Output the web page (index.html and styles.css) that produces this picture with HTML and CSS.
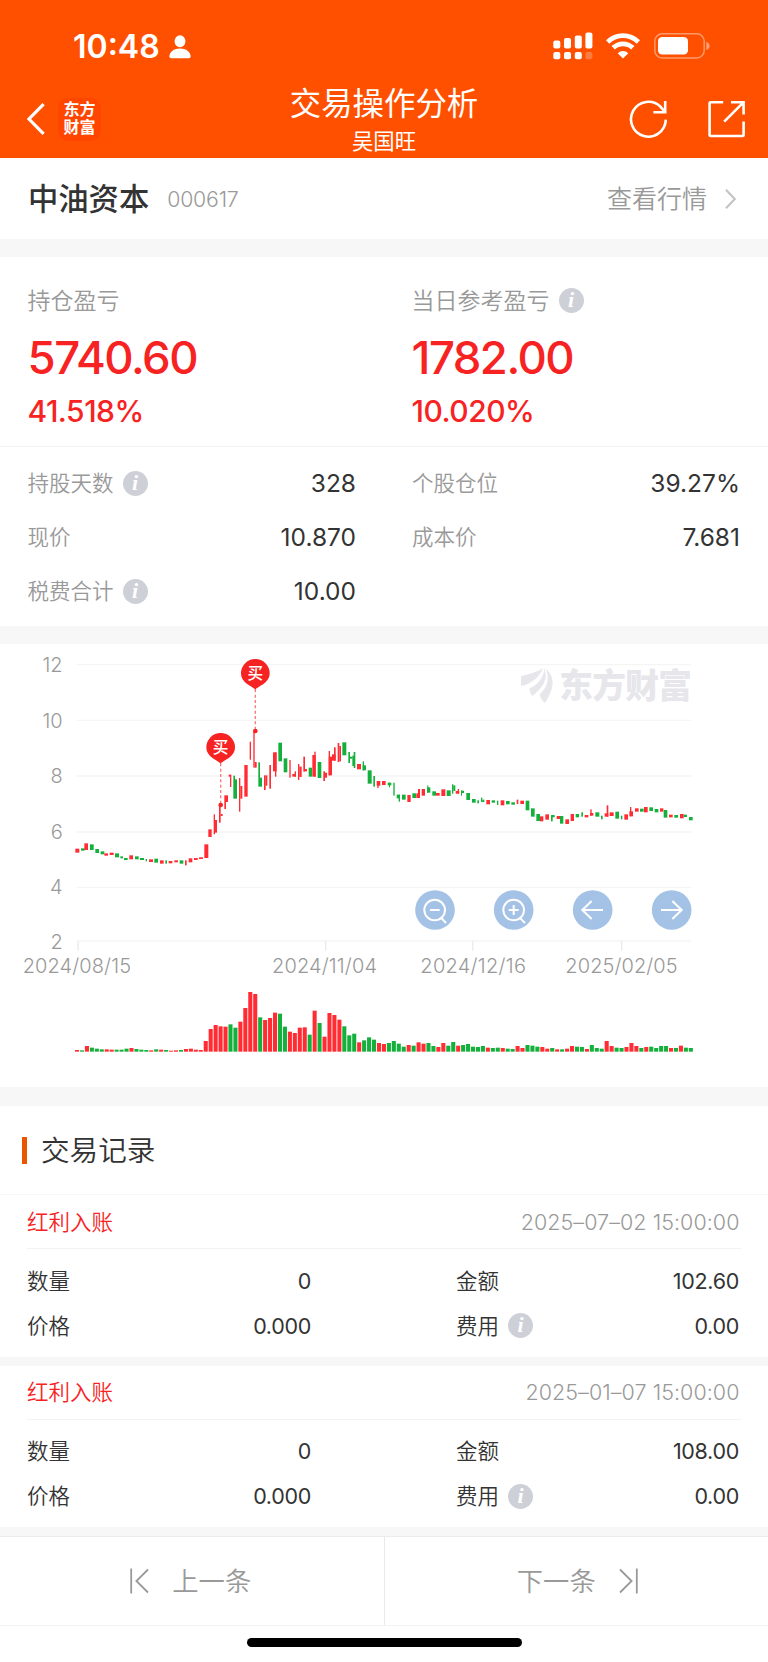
FILE: index.html
```html
<!DOCTYPE html>
<html lang="zh-CN">
<head>
  <meta charset="UTF-8">
  <title>交易操作分析</title>
  <meta name="viewport" content="width=device-width,initial-scale=1">
  <link rel="stylesheet" href="styles.css">
</head>
<body>

<header class="header">
  <!-- phone status bar -->
  <div class="status-bar">
    <div class="status-left">
      <span class="time">10:48</span>
      <svg width="22" height="24" viewBox="0 0 22 24" fill="#fff">
        <ellipse cx="11" cy="6.2" rx="5.4" ry="6"/>
        <path d="M0.4 21.5C0.4 17 5 13.6 11 13.6S21.6 17 21.6 21.5Q21.6 23.3 20 23.3H2Q0.4 23.3 0.4 21.5Z"/>
      </svg>
    </div>
    <div class="status-right">
      <svg width="40" height="28" viewBox="0 0 40 28" fill="#fff">
        <rect x="0.3" y="8.4" width="7" height="8" rx="2"/>
        <rect x="11" y="6" width="7" height="10.4" rx="2"/>
        <rect x="21.8" y="3.4" width="7" height="13" rx="2"/>
        <rect x="32.4" y="0.4" width="7" height="16" rx="2"/>
        <rect x="0.3" y="20" width="7" height="7.3" rx="2"/>
        <rect x="11" y="20" width="7" height="7.3" rx="2"/>
        <rect x="21.8" y="20" width="7" height="7.3" rx="2"/>
        <rect x="32.4" y="20" width="7" height="7.3" rx="2" opacity="0.25"/>
      </svg>
      <svg class="wifi" width="34" height="26" viewBox="0 0 34 26" fill="none" stroke="#fff" stroke-width="4.8">
        <path d="M1.6 9A22 22 0 0 1 32.4 9"/>
        <path d="M7.2 14.8A14 14 0 0 1 26.8 14.8"/>
        <path d="M17 25.4L11.7 20.2A7.6 7.6 0 0 1 22.3 20.2Z" fill="#fff" stroke="none"/>
      </svg>
      <svg width="56" height="26" viewBox="0 0 56 26">
        <rect x="0.8" y="0.8" width="49.4" height="24.2" rx="7.4" fill="none" stroke="#fff" stroke-opacity="0.42" stroke-width="1.5"/>
        <rect x="4" y="4" width="30" height="17.6" rx="4.2" fill="#fff"/>
        <path d="M52.3 8.8C54.3 9.6 55.6 11 55.6 12.9S54.3 16.2 52.3 17Z" fill="#fff" fill-opacity="0.45"/>
      </svg>
    </div>
  </div>

  <div class="nav-bar">
    <div class="nav-left">
      <svg width="18" height="32" viewBox="0 0 18 32" fill="none" stroke="#fff" stroke-width="3.2">
        <path d="M16.6 1.2L2 16L16.6 30.8"/>
      </svg>
      <div class="logo">东方<br>财富</div>
    </div>
    <div class="nav-title">
      <h1>交易操作分析</h1>
      <p>吴国旺</p>
    </div>
    <div class="nav-right">
      <svg width="38" height="38" viewBox="0 0 38 38" fill="none" stroke="#fff" stroke-width="2.6">
        <path d="M36.8 19.6A17.4 17.4 0 1 1 31.6 6.8L35.8 11.6"/>
        <path d="M36.2 1V12.2H24.4"/>
      </svg>
      <svg width="38" height="38" viewBox="0 0 38 38" fill="none" stroke="#fff" stroke-width="2.6">
        <path d="M16.2 2.2H3.8Q2.6 2.2 2.6 3.4V34.8Q2.6 36 3.8 36H35.4Q36.6 36 36.6 34.8V21.4"/>
        <path d="M24 2.2H36.6V14.6M36.2 2.6L17.2 21.6"/>
      </svg>
    </div>
  </div>
</header>

<section class="stock">
  <h2>中油资本</h2>
  <span class="code">000617</span>
  <a class="quote"><span>查看行情</span>
    <svg width="11" height="20" viewBox="0 0 11 20" fill="none" stroke="#c4c4c8" stroke-width="2.2">
      <path d="M1 0.8L9.8 10L1 19.2"/>
    </svg>
  </a>
</section>

<section class="summary">
  <div class="summary-item">
    <p class="label"><span>持仓盈亏</span></p>
    <p class="amount">5740.60</p>
    <p class="percent">41.518%</p>
  </div>
  <div class="summary-item">
    <p class="label"><span>当日参考盈亏</span><i class="info">i</i></p>
    <p class="amount">1782.00</p>
    <p class="percent">10.020%</p>
  </div>
</section>

<section class="details">
  <div class="detail"><span>持股天数</span><i class="info">i</i><b>328</b></div>
  <div class="detail"><span>个股仓位</span><b>39.27%</b></div>
  <div class="detail"><span>现价</span><b>10.870</b></div>
  <div class="detail"><span>成本价</span><b>7.681</b></div>
  <div class="detail"><span>税费合计</span><i class="info">i</i><b>10.00</b></div>
</section>

<!-- price + volume chart, drawn in 3x units -->
<section class="chart">
  <svg viewBox="0 0 2304 1329" width="768" height="443">
    <g class="grid">
      <path d="M231 62H2073M231 229H2073M231 396H2073M231 564H2073M231 730H2073M231 891H2073"/>
      <path class="tick" d="M234 891V920M977 891V920M1418 891V920M1865 891V920"/>
    </g>
    <g class="y-axis">
      <text x="188" y="84">12</text>
      <text x="188" y="251">10</text>
      <text x="188" y="418">8</text>
      <text x="188" y="584">6</text>
      <text x="188" y="750">4</text>
      <text x="188" y="915">2</text>
    </g>
    <g class="x-axis">
      <text x="68" y="988" textLength="325">2024/08/15</text>
      <text x="816" y="988" textLength="315">2024/11/04</text>
      <text x="1261" y="988" textLength="317">2024/12/16</text>
      <text x="1696" y="988" textLength="337">2025/02/05</text>
    </g>
    <g class="watermark">
      <path d="M1563 97C1590 88 1616 84 1630 71C1616 103 1590 121 1563 126Z"/>
      <path d="M1589 133C1612 124 1634 100 1632 72C1646 104 1630 130 1597 156Q1588 146 1589 133Z"/>
      <path d="M1619 151C1640 132 1650 108 1638 74C1662 96 1668 126 1635 177Q1620 164 1619 151Z"/>
      <text x="1678" y="162" textLength="398">东方财富</text>
    </g>
    <g id="candles"></g>
    <g id="volumes"></g>
    <g class="buy">
      <path d="M766 136V261" class="dots"/>
      <circle cx="766" cy="261" r="7"/>
      <path d="M766 137C758 127 723 118 723 88A43 43 0 0 1 809 88C809 118 774 127 766 137Z"/>
      <text x="766" y="105">买</text>
      <path d="M662 358V483" class="dots"/>
      <circle cx="662" cy="483" r="7"/>
      <path d="M662 359C654 349 619 340 619 310A43 43 0 0 1 705 310C705 340 670 349 662 359Z"/>
      <text x="662" y="327">买</text>
    </g>
    <g class="tools">
      <circle cx="1305" cy="798" r="59.5"/>
      <path d="M1323 821L1338 837M1290 798H1319"/>
      <circle class="lens" cx="1304" cy="798" r="31"/>
      <circle cx="1541" cy="798" r="59.5"/>
      <path d="M1559 821L1575 837M1526 798H1556M1541 783V813"/>
      <circle class="lens" cx="1541" cy="798" r="31"/>
      <circle cx="1778" cy="798" r="59.5"/>
      <path d="M1809 798H1747M1775 771L1747 798L1775 825"/>
      <circle cx="2015" cy="798" r="59.5"/>
      <path d="M1983 798H2045M2017 771L2045 798L2017 825"/>
    </g>
  </svg>
</section>

<section class="records">
  <h3><span>交易记录</span></h3>

  <div class="record">
    <div class="record-head"><span>红利入账</span><time>2025–07–02 15:00:00</time></div>
    <div class="record-body">
      <div class="cell"><span>数量</span><b>0</b></div>
      <div class="cell"><span>金额</span><b>102.60</b></div>
      <div class="cell"><span>价格</span><b>0.000</b></div>
      <div class="cell"><span>费用</span><i class="info">i</i><b>0.00</b></div>
    </div>
  </div>

  <div class="record">
    <div class="record-head"><span>红利入账</span><time>2025–01–07 15:00:00</time></div>
    <div class="record-body">
      <div class="cell"><span>数量</span><b>0</b></div>
      <div class="cell"><span>金额</span><b>108.00</b></div>
      <div class="cell"><span>价格</span><b>0.000</b></div>
      <div class="cell"><span>费用</span><i class="info">i</i><b>0.00</b></div>
    </div>
  </div>
</section>

<nav class="pager">
  <a>
    <svg width="19" height="26" viewBox="0 0 19 26" fill="none" stroke="#999" stroke-width="1.8">
      <path d="M1.2 0.5V25.5M18 1.5L6.4 13L18 24.5"/>
    </svg>
    <span>上一条</span>
  </a>
  <a>
    <span>下一条</span>
    <svg width="19" height="26" viewBox="0 0 19 26" fill="none" stroke="#999" stroke-width="1.8">
      <path d="M17.8 0.5V25.5M1 1.5L12.6 13L1 24.5"/>
    </svg>
  </a>
</nav>
<div class="home-bar"></div>

<script src="chart.js"></script>
</body>
</html>
```
FILE: styles.css
```css
:root {
  --brand: #ff5000;
  --red: #f72323;
  --text: #333;
  --muted: #999;
  --gap-bg: #f7f7f7;
  --line: #f3f3f3;
}
* { box-sizing: border-box; }
body {
  margin: 0;
  width: 768px;
  height: 1662px;
  overflow: hidden;
  background: #fff;
  color: var(--text);
  font-family: Inter, 'Noto Sans CJK SC', sans-serif;
  font-size: 21.5px;
}
h1, h2, h3, p { margin: 0; font-weight: 400; }
b { font-weight: 400; }
svg { display: block; flex: none; }

/* Header */
.header {
  height: 158px;
  background: var(--brand);
  color: #fff;
}
.status-bar {
  height: 80px;
  padding: 13px 58px 0 73px;
  display: flex;
  justify-content: space-between;
  align-items: center;
}
.status-left, .status-right { display: flex; align-items: center; }
.time {
  width: 96px;
  font-size: 32px;
  font-weight: 600;
  line-height: 40px;
}
.status-right { padding-bottom: 2px; }
.wifi { margin: 0 14px 0 13px; }
.nav-bar {
  height: 78px;
  display: grid;
  grid-template-columns: 1fr auto 1fr;
}
.nav-left {
  display: flex;
  align-items: center;
  gap: 13px;
  padding-left: 27px;
}
.logo {
  width: 43px;
  height: 43px;
  padding-top: 2px;
  border-radius: 10px;
  background: #ff4600;
  font-size: 16px;
  font-weight: 700;
  line-height: 18px;
  text-align: center;
}
.nav-title { padding-top: 1px; text-align: center; }
.nav-title h1 { font-size: 31.4px; line-height: 46px; }
.nav-title p { font-size: 21.4px; line-height: 28px; }
.nav-right {
  display: flex;
  align-items: center;
  justify-content: flex-end;
  gap: 40px;
  padding-right: 23px;
}

/* Stock name row */
.stock {
  height: 99px;
  border-bottom: 18px solid var(--gap-bg);
  padding: 0 32px 0 28px;
  display: flex;
  align-items: center;
}
.stock h2 {
  padding-bottom: 3px;
  font-size: 30.3px;
  font-weight: 500;
}
.code {
  margin-left: 18px;
  color: var(--muted);
  font-size: 21.3px;
  font-weight: 300;
  letter-spacing: -0.2px;
}
.quote {
  margin-left: auto;
  display: flex;
  align-items: center;
  gap: 18px;
  color: var(--muted);
  font-size: 25px;
  font-weight: 350;
}
.quote span { padding-bottom: 3px; }

.info {
  flex: none;
  width: 25px;
  height: 25px;
  margin-left: 9px;
  border-radius: 50%;
  background: #cdd0d7;
  color: #fff;
  font: italic bold 22px/24px 'Liberation Serif', serif;
  text-align: center;
}

/* Profit and loss */
.summary {
  height: 190px;
  border-bottom: 1px solid var(--line);
  padding: 0 27.5px;
  display: grid;
  grid-template-columns: 384px 1fr;
}
.label {
  height: 34px;
  margin-top: 26px;
  display: flex;
  align-items: center;
  color: var(--muted);
  font-size: 23px;
  font-weight: 350;
}
.label span { padding-bottom: 2px; }
.amount {
  margin-top: 13px;
  color: var(--red);
  font-size: 45.5px;
  font-weight: 500;
  letter-spacing: -1.5px;
  line-height: 56px;
}
.percent {
  margin-top: 5px;
  color: var(--red);
  font-size: 30px;
  font-weight: 500;
  letter-spacing: -0.5px;
  line-height: 40px;
}
.details {
  height: 197px;
  border-bottom: 18px solid var(--gap-bg);
  padding: 9px 28px 0 27.5px;
  display: grid;
  grid-template-columns: 328.5px 328px;
  grid-auto-rows: 54px;
  column-gap: 56px;
}
.detail, .cell { display: flex; align-items: center; }
.detail span, .cell span { padding-bottom: 2.5px; }
.detail b, .cell b { margin-left: auto; }
.detail span { color: var(--muted); font-weight: 350; }
.detail b { font-size: 24.5px; }

/* Chart */
.chart { height: 462px; border-bottom: 19px solid var(--gap-bg); }
.grid path { fill: none; stroke: #f5f5f6; stroke-width: 4; }
.grid .tick { stroke: #ebebec; }
.y-axis text, .x-axis text {
  fill: var(--muted);
  font-size: 60px;
  font-weight: 300;
}
.y-axis text { text-anchor: end; }
.watermark { fill: #e6e6eb; }
.watermark text { font-size: 101px; font-weight: 900; }
.up { fill: #ff2c34; }
.down { fill: #14b03c; }
.buy { fill: var(--red); }
.buy text {
  fill: #fff;
  font-size: 47px;
  font-weight: 500;
  text-anchor: middle;
}
.buy .dots {
  stroke: var(--red);
  stroke-width: 4;
  stroke-dasharray: 9 7;
  opacity: 0.6;
}
.tools circle { fill: #a4c2e5; }
.tools path, .tools .lens {
  fill: none;
  stroke: #fff;
  stroke-width: 6;
}

/* Trade records */
.records h3 {
  height: 89px;
  border-bottom: 1.5px solid var(--gap-bg);
  padding-left: 22px;
  display: flex;
  align-items: center;
  gap: 14px;
  font-size: 28.6px;
  font-weight: 350;
}
.records h3::before {
  content: '';
  width: 5px;
  height: 27px;
  background: #eb5500;
}
.records h3 span { padding-bottom: 3px; }
.record {
  height: 170.5px;
  border-bottom: 9px solid var(--gap-bg);
  padding: 0 27px;
}
.record-head {
  height: 54px;
  border-bottom: 1px solid var(--line);
  padding-right: 1.5px;
  display: flex;
  align-items: center;
  justify-content: space-between;
}
.record-head span {
  padding-bottom: 2.5px;
  color: var(--red);
  font-weight: 350;
}
.record-head time {
  color: var(--muted);
  font-weight: 300;
  letter-spacing: 0.05px;
}
.record-body {
  padding: 9px 2px 0 0;
  display: grid;
  grid-template-columns: 284px 283px;
  grid-auto-rows: 45px;
  justify-content: space-between;
}
.cell span { font-weight: 350; }
.cell b { letter-spacing: -0.3px; }

/* Prev / next */
.pager {
  height: 90px;
  border-top: 1px solid #ececec;
  border-bottom: 1px solid var(--line);
  display: grid;
  grid-template-columns: 384.5px 1fr;
}
.pager a {
  display: flex;
  align-items: center;
  justify-content: center;
  gap: 23px;
  color: var(--muted);
  font-size: 26.3px;
  font-weight: 350;
}
.pager a:first-child { border-right: 1px solid #e9e9e9; padding-right: 2px; }
.pager a:last-child { padding-left: 2px; }
.pager span { padding-bottom: 3px; }
.home-bar {
  width: 275px;
  height: 9px;
  margin: 12px auto 0;
  border-radius: 5px;
  background: #000;
}
```
FILE: chart.js
```js
// candle pieces: [colour, left, right, top, bottom]
const segments = [
  { x: 0, bars: [
    ['r',226,238,626,638],['g',243,254,625,632],['r',253,264,610,630],['g',270,281,613,630],
    ['g',286,297,627,639],['g',302,313,634,643],['r',313,324,640,647],['r',329,341,638,645],
    ['g',345,357,640,652],['g',361,369,649,655],['g',372,383,654,660],['r',388,399,646,658],
    ['g',405,416,649,658],['g',420,432,654,660],['g',437,441,657,664],['r',447,459,658,666],
    ['g',463,474,656,668],['r',480,491,661,671],['g',496,501,661,671],['r',506,517,663,670],
    ['r',523,534,661,667],['g',539,550,661,671],['r',555,560,661,676],['r',566,577,655,667],
    ['r',582,593,654,660],['r',597,609,652,657],['r',613,625,613,654],['r',625,635,568,591],
    ['r',641,645,523,583],['r',645,651,540,578],['r',657,662,495,548],['r',662,668,522,528],
    ['r',673,678,466,507],['r',678,684,466,486],['r',686,692,404,410],['r',690,694,404,441],
    ['g',700,705,407,476],['g',705,711,418,476],['r',717,721,414,515],['r',721,727,438,476],
    ['r',733,743,375,470]
  ]},
  { x: 570, bars: [
    ['r',179,183,305,359],['r',190,194,273,383],['r',194,200,366,383],['g',205,210,367,440],
    ['g',210,216,413,440],['r',222,227,406,450],['r',227,232,406,437],['r',238,243,375,446],
    ['r',249,260,337,394],['r',255,259,337,410],['g',265,276,308,364],['g',281,292,355,397],
    ['r',298,302,360,413],['r',307,318,402,410],['r',314,318,394,410],['r',324,328,372,420],
    ['r',328,335,380,411],['r',340,345,350,395],['r',345,351,387,394],['g',356,366,383,410],
    ['r',367,377,345,410],['r',373,377,335,410],['g',383,394,366,414],['r',400,405,394,423],
    ['r',405,411,398,413],['r',416,426,350,406],['r',416,420,333,406],['r',426,437,343,362],
    ['r',432,437,322,362],['r',443,448,309,366],['r',448,453,318,364],['g',457,469,307,346],
    ['g',475,480,336,369],['g',480,487,350,356],['g',487,492,347,378],['g',491,496,336,384],
    ['r',501,513,372,388],['g',518,528,376,391],['g',518,522,364,391],['g',533,545,391,431],
    ['g',550,555,408,440],['r',560,571,423,437],['r',562,566,423,444],['r',576,587,423,435],
    ['g',593,604,428,436],['g',597,600,428,442],['g',610,614,428,467],['g',620,630,464,475],
    ['g',626,630,464,485],['g',636,647,464,479],['r',652,662,465,486],['g',667,678,460,474],
    ['r',679,690,460,474],['r',684,690,447,474],['r',695,705,447,467],['g',711,721,442,458],
    ['g',712,715,436,458],['g',727,738,454,467],['r',738,749,459,467],['r',754,766,448,468]
  ]},
  { x: 1200, bars: [
    ['g',140,152,451,468],['g',156,160,433,461],['g',160,166,436,453],['r',167,178,453,461],
    ['r',173,177,447,461],['g',183,186,451,467],['g',186,192,452,459],['g',199,210,459,480],
    ['g',216,227,477,488],['g',232,237,481,490],['g',243,247,473,486],['g',247,253,479,486],
    ['r',259,270,480,493],['g',275,285,481,488],['g',291,295,482,495],['r',302,313,481,496],
    ['g',318,329,483,493],['g',334,345,487,494],['r',350,355,479,492],['r',361,372,482,492],
    ['g',377,388,482,511],['g',393,404,505,530],['g',409,420,522,543],['r',420,430,529,544],
    ['r',436,447,523,539],['g',453,464,525,532],['g',453,458,525,544],['r',470,480,528,537],
    ['g',480,490,528,551],['r',496,507,538,552],['r',512,522,522,543],['g',527,537,522,532],
    ['g',544,549,517,530],['r',554,565,525,532],['r',570,580,519,527],['r',571,575,508,527],
    ['g',586,598,517,530],['g',603,608,527,538],['r',614,625,520,530],['r',620,625,496,530],
    ['r',629,641,517,528],['g',646,657,515,536],['g',663,667,527,538],['r',673,684,523,539],
    ['r',688,699,514,529],['r',690,694,501,529],['r',705,716,505,515],['g',720,731,506,515],
    ['r',732,743,501,517],['g',748,759,502,513],['g',764,775,507,517],['r',780,790,505,515],
    ['g',791,802,510,533],['r',807,818,524,532],['g',823,834,525,533],['r',840,851,522,535],
    ['g',851,861,524,531],['g',867,878,531,541]
  ]}
];

// daily volume, r = up day, g = down day
const volumes = 'r5 g4 r17 g12 g9 g7 r7 r6 g6 g6 g9 r11 g8 g6 g5 r4 g7 r6 g5 r3 r4 g5 r8 r9 r6 r5 ' +
  'r32 r68 r80 r76 r75 g82 g72 r90 r131 r179 r173 g103 r95 r101 r117 g114 g75 r60 r56 r72 r73 g51 ' +
  'r123 g86 r45 r116 r110 r96 g76 g49 g54 r28 g34 g43 g36 r26 r23 g26 g32 g24 g15 r20 g18 r28 r24 ' +
  'g26 g17 r14 r26 g18 g29 r18 g20 g23 g15 g14 g17 r12 g11 g12 r11 g9 g8 r17 r11 g20 g18 g15 r14 ' +
  'r9 g11 r7 g7 r9 r17 g15 g14 r8 g20 g11 g9 r32 r17 g12 g11 r14 r26 r17 g11 r14 g15 g11 g17 g17 ' +
  'r11 g11 r18 g12 g11';

function addBar(parent, colour, x, y, w, h) {
  const rect = document.createElementNS('http://www.w3.org/2000/svg', 'rect');
  rect.setAttribute('class', colour === 'r' ? 'up' : 'down');
  rect.setAttribute('x', x);
  rect.setAttribute('y', y);
  rect.setAttribute('width', w);
  rect.setAttribute('height', h);
  parent.appendChild(rect);
}

const candlesEl = document.getElementById('candles');
segments.forEach(s => {
  s.bars.forEach(([c, left, right, top, bottom]) => {
    addBar(candlesEl, c, s.x + left, top - 12, right - left, bottom - top);
  });
});

const volumesEl = document.getElementById('volumes');
volumes.split(' ').forEach((v, i) => {
  const h = Number(v.slice(1));
  addBar(volumesEl, v[0], 225 + i * 14.85, 1223 - h, 12.2, h);
});
```
